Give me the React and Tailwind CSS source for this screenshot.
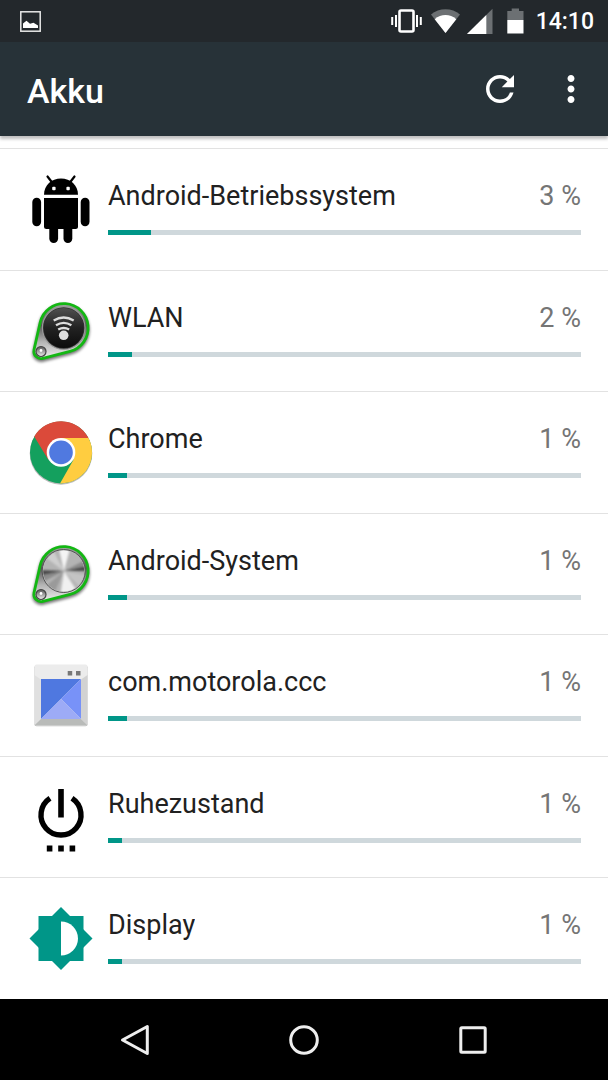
import React from 'react';
import { MdRefresh, MdMoreVert } from 'react-icons/md';

const AndroidIcon = () => (
    <svg viewBox="0 0 64 68" className="w-16 h-[68px] overflow-visible" aria-hidden="true">
        <path d="M18.5 1.5 23.5 8M45.5 1.5 40.5 8" stroke="#000" strokeWidth="2.2" strokeLinecap="round" />
        <path d="M15 19.7C15 10 22.5 3.4 32 3.4S49 10 49 19.7Z" />
        <path d="M15 23H49V51.5Q49 54 46.5 54H17.5Q15 54 15 51.5Z" />
        <rect x="3.3" y="22.7" width="8.8" height="28.5" rx="4.4" />
        <rect x="51.7" y="22.7" width="8.8" height="28.5" rx="4.4" />
        <rect x="20.3" y="45" width="8.8" height="23" rx="4.4" />
        <rect x="34.5" y="45" width="8.8" height="23" rx="4.4" />
        <rect x="23.2" y="11.8" width="3.4" height="3.4" rx="1" fill="#fff" />
        <rect x="37.4" y="11.8" width="3.4" height="3.4" rx="1" fill="#fff" />
    </svg>
);

// teardrop tag shared by the WLAN and Android-System icons
const TagBase = ({ id, children }) => (
    <svg viewBox="0 0 64 68" className="w-16 h-[68px] overflow-visible" aria-hidden="true">
        <defs>
            <linearGradient id={`${id}-body`} x1="0" y1="0" x2="0" y2="1">
                <stop offset="0" stopColor="#a5a5a5" />
                <stop offset="0.4" stopColor="#555" />
                <stop offset="0.7" stopColor="#b5b5b5" />
                <stop offset="1" stopColor="#eee" />
            </linearGradient>
            <linearGradient id={`${id}-hole`} x1="0" y1="0" x2="0" y2="1">
                <stop offset="0" stopColor="#555" />
                <stop offset="0.45" stopColor="#999" />
                <stop offset="1" stopColor="#f4f4f4" />
            </linearGradient>
            <filter id={`${id}-shadow`} x="-20%" y="-20%" width="140%" height="140%">
                <feGaussianBlur stdDeviation="1.8" />
            </filter>
        </defs>
        <path
            d="M11.2 25.3A24.3 24.3 0 1 1 41 54.4L13.8 61.3A7.2 7.2 0 0 1 5 52.9Z"
            transform="translate(0 2)" fill="#000" stroke="#000" strokeWidth="3" opacity="0.55" filter={`url(#${id}-shadow)`}
        />
        <path
            d="M11.2 25.3A24.3 24.3 0 1 1 41 54.4L13.8 61.3A7.2 7.2 0 0 1 5 52.9Z"
            fill={`url(#${id}-body)`} stroke="#13b713" strokeWidth="2.8"
        />
        <circle cx="12" cy="54.5" r="5" fill={`url(#${id}-hole)`} stroke="#444" strokeWidth="1.2" />
        <circle cx="12" cy="53.5" r="1.4" fill="#fff" />
        {children}
    </svg>
);

const WlanIcon = () => (
    <TagBase id="wlan">
        <defs>
            <linearGradient id="wlan-dial" x1="0" y1="0" x2="0" y2="1">
                <stop offset="0" stopColor="#505050" />
                <stop offset="0.5" stopColor="#222" />
                <stop offset="1" stopColor="#0c0c0c" />
            </linearGradient>
        </defs>
        <circle cx="34.7" cy="31" r="21.3" fill="#333" stroke="#999" strokeWidth="1.2" />
        <circle cx="34.7" cy="31" r="20" fill="url(#wlan-dial)" />
        <g fill="none" stroke="#ddd" strokeWidth="2.3">
            <path d="M24.7 23.5Q34.7 17.5 44.7 23.5" />
            <path d="M27 28.2Q34.7 23.5 42.4 28.2" />
            <path d="M29.2 32.5Q34.7 29.5 40.2 32.5" />
        </g>
        <circle cx="34.7" cy="38.3" r="4.8" fill="#ddd" />
    </TagBase>
);

const SystemIcon = () => (
    <TagBase id="system">
        <defs>
            <clipPath id="system-clip">
                <circle cx="34.7" cy="31" r="20.5" />
            </clipPath>
            <filter id="system-blur">
                <feGaussianBlur stdDeviation="1.2" />
            </filter>
        </defs>
        <circle cx="34.7" cy="31" r="21.5" fill="#bbb" stroke="#555" strokeWidth="1" />
        <g clipPath="url(#system-clip)">
            <rect x="13" y="9" width="44" height="44" fill="#b4b4b4" />
            <g filter="url(#system-blur)">
                <path d="M35 31 10 30V36ZM35 31 60 25V31Z" fill="#4a4a4a" />
                <path d="M35 31 10 36V44ZM35 31 60 18V25Z" fill="#8c8c8c" />
                <path d="M35 31 29 5H42Z" fill="#f4f4f4" />
                <path d="M35 31 31 57H52Z" fill="#f0f0f0" />
                <path d="M35 31 12 14 22 6Z" fill="#cfcfcf" />
                <path d="M35 31 60 36 54 50Z" fill="#c4c4c4" />
                <path d="M35 31 12 50 24 56Z" fill="#9a9a9a" />
            </g>
        </g>
    </TagBase>
);

const ChromeIcon = () => (
    <svg viewBox="0 0 64 68" className="w-16 h-[68px] overflow-visible" aria-hidden="true">
        <circle cx="32" cy="35.4" r="31.3" fill="#bbb" />
        <circle cx="32" cy="34.4" r="31" fill="#14a05e" />
        <path d="M32 20H59.5A31 31 0 0 1 31 65.4L44.5 41.7Z" fill="#ffcd40" />
        <path d="M5.2 18.5A31 31 0 0 1 59.5 20H32L19.3 41.7Z" fill="#db4a3a" />
        <circle cx="32" cy="34.4" r="14.3" fill="#fff" />
        <circle cx="32" cy="34.4" r="11.8" fill="#5079e0" />
    </svg>
);

const CccIcon = () => (
    <svg viewBox="0 0 64 68" className="w-16 h-[68px] overflow-visible" aria-hidden="true">
        <rect x="5.5" y="4.3" width="53" height="61" rx="2" fill="#bbb" />
        <rect x="5.5" y="3.6" width="53" height="61" rx="2" fill="#ececec" />
        <path d="M5.5 14 12 18.5V58L5.5 64Z" fill="#e0e0e0" />
        <path d="M58.5 14 52 18.5V58L58.5 64Z" fill="#d2d2d2" />
        <path d="M12 58H52L58.5 64.3H5.5Z" fill="#b9bbb9" />
        <rect x="38.7" y="10" width="4.5" height="4.5" fill="#777" />
        <rect x="47" y="10" width="4.5" height="4.5" fill="#777" />
        <path d="M12 18H52L12 58Z" fill="#4f78e0" />
        <path d="M52 18V58L32 38Z" fill="#7892f8" />
        <path d="M32 38 52 58H12Z" fill="#9dabf6" />
    </svg>
);

const PowerIcon = () => (
    <svg viewBox="0 0 64 68" className="w-16 h-[68px] overflow-visible" aria-hidden="true">
        <path d="M21 15.3A20 20 0 1 0 43 15.3" fill="none" stroke="#000" strokeWidth="5.4" />
        <rect x="29.2" y="6" width="5.6" height="28.5" />
        <path d="M17.8 62.6h5.6v5.8h-5.6ZM29.2 62.6h5.6v5.8h-5.6ZM40.6 62.6h5.6v5.8h-5.6Z" />
    </svg>
);

const DisplayIcon = () => (
    <svg viewBox="0 0 64 68" className="w-16 h-[68px] overflow-visible" aria-hidden="true">
        <path d="M32 3 63.5 34.5 32 66 .5 34.5Z" fill="#009688" />
        <rect x="9.5" y="12" width="45" height="45" fill="#009688" />
        <path d="M32 17.5A17 17 0 0 1 32 51.5Z" fill="#fff" />
    </svg>
);

// bar is the filled share of the usage bar
const apps = [
    { name: 'Android-Betriebssystem', percent: 3, bar: 9, Icon: AndroidIcon },
    { name: 'WLAN', percent: 2, bar: 5, Icon: WlanIcon },
    { name: 'Chrome', percent: 1, bar: 4, Icon: ChromeIcon },
    { name: 'Android-System', percent: 1, bar: 4, Icon: SystemIcon },
    { name: 'com.motorola.ccc', percent: 1, bar: 4, Icon: CccIcon },
    { name: 'Ruhezustand', percent: 1, bar: 3, Icon: PowerIcon },
    { name: 'Display', percent: 1, bar: 3, Icon: DisplayIcon },
];

const StatusBar = () => (
    <div className="flex h-[42px] items-center justify-between bg-[#23282c] pl-5 pr-[14px] text-white">
        <svg viewBox="0 0 21 21" className="size-[21px]" aria-hidden="true">
            <rect x="0.8" y="0.8" width="19.4" height="19.4" fill="none" stroke="#e8e8e8" strokeWidth="1.5" />
            <path d="M3 17V12.5L6.5 9.7 10 12.8 13.5 11.8 18 14.5V17Z" fill="#fff" />
        </svg>
        <div className="flex items-center">
            <svg viewBox="0 0 31 26" className="w-[31px] h-[26px]" aria-hidden="true">
                <rect x="8.5" y="2.5" width="14" height="21" rx="1.5" fill="none" stroke="#fff" strokeWidth="2.6" />
                <path d="M1.2 9v8M5 7v12M26 7v12M29.8 9v8" stroke="#fff" strokeWidth="2" />
            </svg>
            <svg viewBox="0 0 29 26" className="ml-[9px] w-[29px] h-[26px]" aria-hidden="true">
                <path d="M0 6.5C8 -.6 21 -.6 29 6.5L14.5 25Z" fill="#6c7073" />
                <path d="M3.7 11.2C10 5.6 19 5.6 25.3 11.2L14.5 25Z" fill="#fff" />
            </svg>
            <svg viewBox="0 0 26 26" className="ml-[7px] size-[26px]" aria-hidden="true">
                <path d="M0 26 25.5 .7V26Z" fill="#6c7073" />
                <path d="M0 26 19.3 6.9V26Z" fill="#fff" />
            </svg>
            <svg viewBox="0 0 17 26" className="ml-[14px] w-[17px] h-[26px]" aria-hidden="true">
                <path d="M.3 3H4.7V.5H12V3H16.5V12H.3Z" fill="#6c7073" />
                <path d="M.3 12H16.5V25.5H.3Z" fill="#fff" />
            </svg>
            <time className="ml-3 pt-0.5 text-[23px] font-medium leading-8">14:10</time>
        </div>
    </div>
);

const Toolbar = () => (
    <header className="relative flex h-[94px] items-center justify-between bg-[#273238] pl-[27px] pr-4 text-white shadow-[0_3px_3px_rgba(0,0,0,0.25)]">
        <h1 className="pt-1 text-[34px] font-medium leading-10">Akku</h1>
        <div className="flex gap-[29px]">
            <button type="button" aria-label="Aktualisieren">
                <MdRefresh className="size-[42px]" />
            </button>
            <button type="button" aria-label="Weitere Optionen">
                <MdMoreVert className="size-[42px]" />
            </button>
        </div>
    </header>
);

const AppRow = ({ name, percent, bar, Icon }) => (
    <li className="flex flex-1 border-t border-[#e2e2e2]">
        <button type="button" className="flex w-full items-start gap-[15px] pl-[29px] pr-[27px] text-left">
            <span className="shrink-0 py-[26px]">
                <Icon />
            </span>
            <span className="flex min-w-0 flex-1 flex-col gap-4 pt-[29px]">
                <span className="flex justify-between text-[27px] leading-9">
                    <span className="truncate text-[#212121]">{name}</span>
                    <span className="shrink-0 text-[#757575]">{percent} %</span>
                </span>
                <span className="block h-[5px] bg-[#cfd8dc]">
                    <span className="block h-full bg-[#009688]" style={{ width: `${bar}%` }} />
                </span>
            </span>
        </button>
    </li>
);

const NavBar = () => (
    <nav className="grid h-[81px] grid-cols-3 items-center bg-black px-[50px]">
        <button type="button" aria-label="Zurück" className="flex justify-center">
            <svg viewBox="0 0 32 32" className="size-8" aria-hidden="true">
                <path d="M28.3 2.5V29.5L3.5 16Z" fill="none" stroke="#eee" strokeWidth="3" strokeLinejoin="round" />
            </svg>
        </button>
        <button type="button" aria-label="Startseite" className="flex justify-center">
            <svg viewBox="0 0 32 32" className="size-8" aria-hidden="true">
                <circle cx="16" cy="16" r="13.3" fill="none" stroke="#eee" strokeWidth="3" />
            </svg>
        </button>
        <button type="button" aria-label="Übersicht" className="flex justify-center">
            <svg viewBox="0 0 32 32" className="size-8" aria-hidden="true">
                <rect x="3.8" y="3.8" width="24.4" height="24.4" rx="1" fill="none" stroke="#eee" strokeWidth="3" />
            </svg>
        </button>
    </nav>
);

const App = () => {
    return (
        <div className="flex min-h-screen flex-col bg-white font-['Roboto',sans-serif]">
            <StatusBar />
            <Toolbar />
            <main className="flex flex-1 flex-col pt-3">
                <ul className="flex flex-1 flex-col">
                    {apps.map((app) => (
                        <AppRow key={app.name} {...app} />
                    ))}
                </ul>
            </main>
            <NavBar />
        </div>
    );
};

export default App;
